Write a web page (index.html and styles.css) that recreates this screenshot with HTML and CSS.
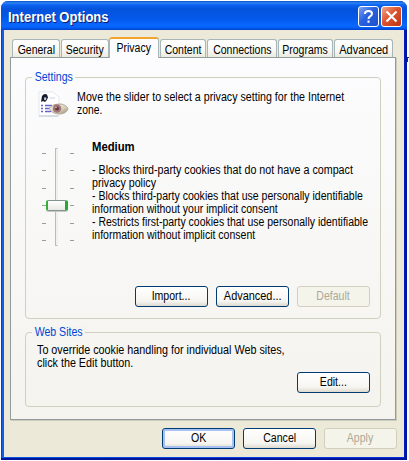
FILE: index.html
```html
<!DOCTYPE html>
<html lang="en">
<head>
<meta charset="utf-8">
<title>Internet Options</title>
<link rel="stylesheet" href="styles.css">
</head>
<body>
<div class="window">
  <header class="titlebar">
    <h1><span>Internet Options</span></h1>
    <button class="caption help" aria-label="Help"><svg width="19" height="19" viewBox="0 0 19 19"><path d="M6 7V6.500Q6 4 9.500 4T13 6.700Q13 8.200 10.800 9.700Q9.500 10.500 9.500 12M9.500 13.500v2.200" fill="none" stroke="#fff" stroke-width="2"/></svg></button>
    <button class="caption close" aria-label="Close"><svg width="19" height="19" viewBox="0 0 19 19"><path d="M4.500 4.500l10 10M14.500 4.500l-10 10" fill="none" stroke="#fff" stroke-width="2.200"/></svg></button>
  </header>
  <main class="client">
    <nav class="tabs">
      <div class="tab general"><span>General</span></div>
      <div class="tab security"><span>Security</span></div>
      <div class="tab privacy active"><span>Privacy</span></div>
      <div class="tab content"><span>Content</span></div>
      <div class="tab connections"><span>Connections</span></div>
      <div class="tab programs"><span>Programs</span></div>
      <div class="tab advanced"><span>Advanced</span></div>
    </nav>
    <section class="panel">
      <section class="group settings">
        <h2>Settings</h2>
        <div class="intro">
          <svg class="icon" width="34" height="28" viewBox="0 0 34 28">
            <defs><linearGradient id="eye" x2="1" y2="1"><stop offset="0" stop-color="#fffef2"/><stop offset=".6" stop-color="#d8cfb9"/><stop offset="1" stop-color="#8f8674"/></linearGradient></defs>
            <path d="M2 1h14l6 5v19H2z" fill="#fff" stroke="#e4e7f0"/>
            <path d="M2 25h19" stroke="#bfc6d8"/>
            <path d="M5 5q2-3 5-1.500l1 3-1.500 3L8 11l-2-1-2 1z" fill="#171b2b"/>
            <path d="M7.500 6l2 1-1 2.500-1.500-1z" fill="#d5dfef"/>
            <path d="M13 7h5" stroke="#c8cfef"/>
            <path d="M4 14.500h2m2 0h7M4 17.500h2m2 0h5M4 20.500h2m2 0h6" stroke="#6961ca" stroke-width="1.500"/>
            <path d="M12 17q5-5 12-4 6 1 7 5-2 5-9 5-7 0-10-6z" fill="url(#eye)" stroke="#b4aa98"/>
            <circle cx="20" cy="17.500" r="4.300" fill="#a57878"/>
            <circle cx="20" cy="17.500" r="2" fill="#603846"/>
            <circle cx="19" cy="16.500" r=".8" fill="#e9cbd2"/>
          </svg>
          <div class="copy"><p class="i1"><span>Move the slider to select a privacy setting for the Internet</span></p><p class="i2"><span>zone.</span></p></div>
        </div>
        <div class="level">
          <div class="slider">
            <div class="ticks"><i></i><i></i><i></i><i></i><i></i><i></i></div>
            <div class="track"><div class="thumb"></div></div>
            <div class="ticks"><i></i><i></i><i></i><i></i><i></i><i></i></div>
          </div>
          <div class="details">
            <h3><span>Medium</span></h3>
            <p class="d1"><span>- Blocks third-party cookies that do not have a compact</span></p>
            <p class="d2"><span>privacy policy</span></p>
            <p class="d3"><span>- Blocks third-party cookies that use personally identifiable</span></p>
            <p class="d4"><span>information without your implicit consent</span></p>
            <p class="d5"><span>- Restricts first-party cookies that use personally identifiable</span></p>
            <p class="d6"><span>information without implicit consent</span></p>
          </div>
        </div>
        <div class="actions"><button><span>Import...</span></button><button class="wide"><span>Advanced...</span></button><button disabled><span>Default</span></button></div>
      </section>
      <section class="group sites">
        <h2>Web Sites</h2>
        <div class="copy"><p class="s1"><span>To override cookie handling for individual Web sites,</span></p><p class="s2"><span>click the Edit button.</span></p></div>
        <div class="actions"><button><span>Edit...</span></button></div>
      </section>
    </section>
    <footer class="actions dialog"><button class="default"><span>OK</span></button><button><span>Cancel</span></button><button disabled><span>Apply</span></button></footer>
  </main>
</div>
<div class="edge"></div>
</body>
</html>
```
FILE: styles.css
```css
* { box-sizing: border-box; }
body { margin: 0; width: 409px; height: 461px; overflow: hidden; background: #fff; color: #000; font: 12px/13px "Liberation Sans", sans-serif; position: relative; }
h1, h2, h3, p { margin: 0; font-size: inherit; font-weight: normal; }
p, h3 { height: 13px; white-space: nowrap; }
p span, h1 span, h3 span { display: inline-block; transform: scaleX(.888); transform-origin: 0 50%; }
.window { margin: 1px 0 0 1px; width: 406px; height: 459px; padding: 0 3px 3px; border-radius: 7px 7px 0 0; background: linear-gradient(90deg, #0633cf 0, #176af0 2px, #0855dd 3px, #0831d8 402px, #0018b0 404px, #001290 406px); border-bottom: 2px solid #00149c; overflow: hidden; }
.titlebar { height: 29px; margin: 0 -3px; padding: 5px 5px 0 7px; display: flex; background: linear-gradient(#0855c9 0, #2c85f7 2px, #0c62ee 4px, #0453dc 8px, #0458e9 17px, #0866ff 24px, #0665fc 26px, #0141ce 29px); }
h1 { flex: 1; font-size: 14px; font-weight: bold; line-height: 23px; color: #fff; text-shadow: 1px 1px #0a1e72; }
h1 span { transform: scaleX(.93); }
.caption { width: 21px; height: 21px; padding: 0; margin-left: 2px; border: 1px solid #fff; border-radius: 3px; display: grid; place-items: center; }
.help { background: linear-gradient(135deg, #7aa3f5, #2861de 45%, #1d50c8); }
.close { background: linear-gradient(135deg, #f0a68c, #dd532e 45%, #be3514); }
.client { height: 427px; background: #ece9d8; padding: 7px 5px 0 7px; }
.tabs { display: flex; height: 20px; align-items: flex-end; position: relative; }
.tab { height: 18px; border: 1px solid #a9b6b7; border-bottom: 0; border-radius: 3px 3px 0 0; background: linear-gradient(#fff, #f8f8f5 60%, #eceade); line-height: 20px; white-space: nowrap; margin-right: 1px; display: flex; justify-content: center; }
.tab span { flex: none; transform: scaleX(.875); }
.general { width: 48px; margin-left: 1px; }
.security { width: 48px; margin-right: 0; }
.privacy { width: 50px; }
.content { width: 46px; }
.connections { width: 70px; }
.programs { width: 55px; }
.advanced { width: 59px; margin-right: 0; }
.tab.advanced span { transform: scaleX(.92); }
.tab.active { height: 21px; margin-bottom: -1px; background: #fcfcfe; border-top: 2px solid #f3a52b; line-height: 18px; }
.panel { height: 363px; width: 386px; margin-left: -1px; padding: 20px 14px 0; border: 1px solid #919b9c; background: linear-gradient(#fcfcfe, #f4f3ee); box-shadow: 1px 1px #cfcbbb; }
.group { border: 1px solid #d0d0bf; border-radius: 4px; position: relative; }
.group h2 { position: absolute; top: -7px; left: 6px; padding: 0 3px; color: #0046d5; background: #fbfbfc; white-space: nowrap; transform: scaleX(.88); transform-origin: 0 50%; }
.sites h2 { background: #f5f4f1; }
.settings { height: 242px; margin-top: -1px; }
.sites { height: 75px; margin-top: 13px; padding-left: 11px; padding-top: 11px; }
.intro { display: flex; padding: 13px 0 0 11px; height: 61px; }
.icon { margin-right: 6px; flex: none; }
.level { display: flex; padding: 2px 0 0 14px; height: 147px; }
.slider { display: grid; grid-template-columns: 8px 20px 8px; justify-content: space-between; width: 36px; flex: none; margin-top: 7px; height: 98px; }
.ticks { display: flex; flex-direction: column; justify-content: space-between; height: 88px; margin-top: 5px; padding-left: 2px; }
.ticks i { width: 4px; height: 1px; background: #a19e90; }
.track { width: 3px; height: 98px; margin-left: 7px; border: 1px solid #bdbbae; border-right-color: #eeeeeb; border-radius: 1px; background: #f1f0ea; }
.thumb { width: 22px; height: 11px; margin: 51px 0 0 -10px; position: relative; border: 1px solid #849490; border-left: 2px solid #2fb235; border-right: 3px solid #26a933; border-radius: 2px; background: linear-gradient(#fff, #e8e8e5); box-shadow: 0 1px #cac9c1; }
.details { margin-left: 16px; width: 280px; }
h3 { font-weight: bold; margin-bottom: 10px; }
.details h3 span { transform: scaleX(.94); }
.i2 span { transform: scaleX(.86); }
.d1 span { transform: scaleX(.893); }
.d3 span, .d6 span { transform: scaleX(.877); }
.d4 span, .d5 span { transform: scaleX(.873); }
.s1 span, .s2 span { transform: scaleX(.897); }
.actions { display: flex; gap: 8px; justify-content: flex-end; padding-right: 10px; }
.actions button { width: 73px; height: 21px; padding: 0; border: 1px solid #003c74; border-radius: 3px; background: linear-gradient(#fff, #f6f5f1 75%, #ddd9ce); color: #000; font: inherit; line-height: 19px; }
.actions button span { display: inline-block; transform: scaleX(.88); }
.actions .wide span { transform: scaleX(.91); }
.actions button:disabled { color: #aca899; background: #f5f4ea; border-color: #d2cfbe; }
.actions .default { box-shadow: inset 0 0 0 2px #a7c2f2; }
.sites .actions { margin-top: 2px; }
.dialog { margin-top: 8px; padding: 0; margin-right: 2px; }
.edge { position: absolute; left: 407px; top: 57px; width: 2px; height: 5px; border-left: 1px solid #27277c; border-top: 1px solid #27277c; }
```
